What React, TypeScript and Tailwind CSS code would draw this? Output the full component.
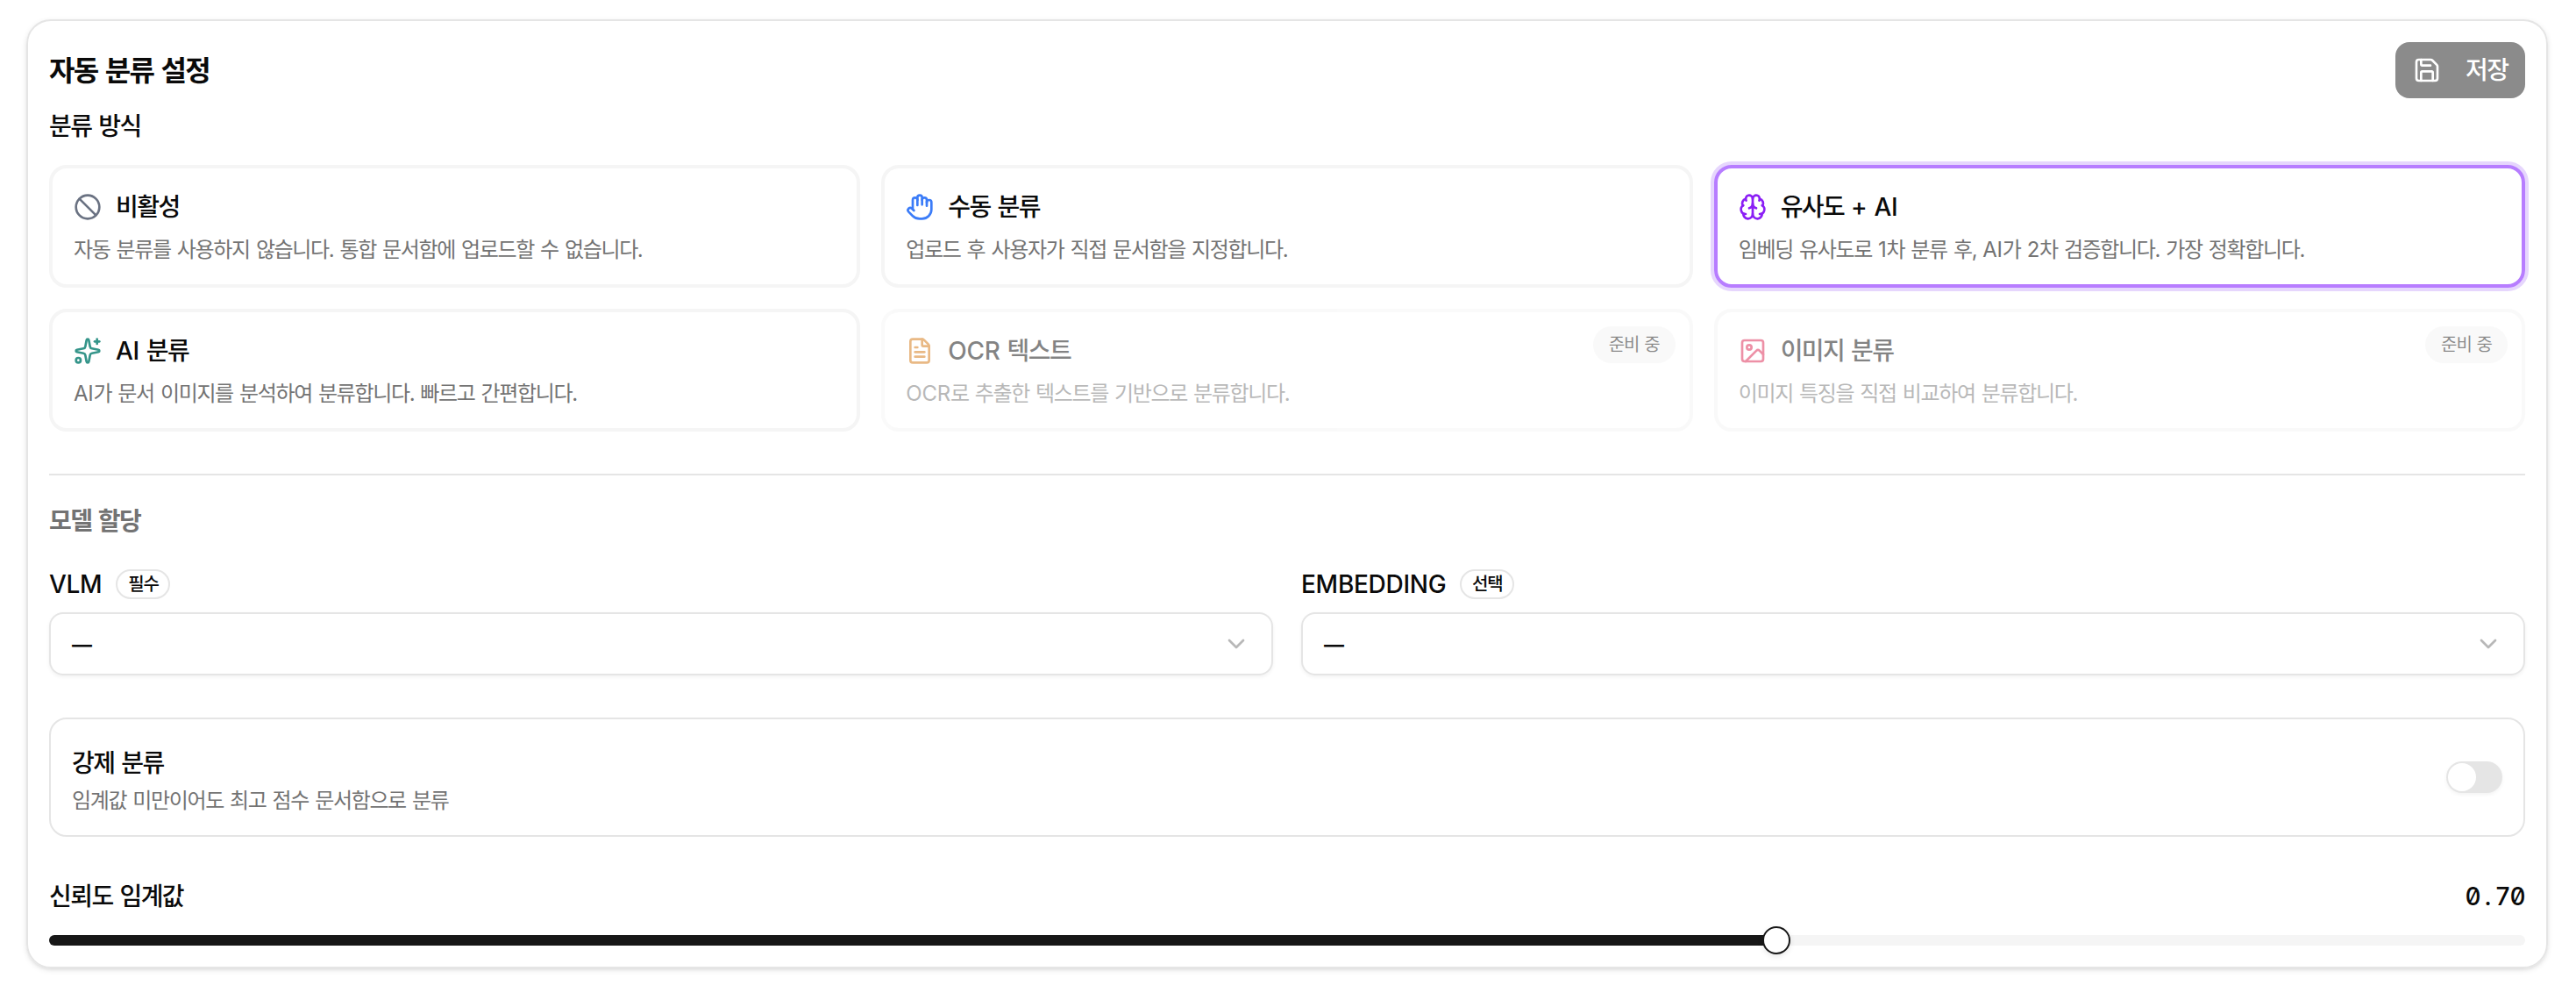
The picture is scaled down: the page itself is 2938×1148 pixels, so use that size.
import { useState } from 'react';
import {
  Ban,
  Brain,
  ChevronDown,
  FileText,
  Hand,
  Image as ImageIcon,
  Save,
  Sparkles,
  type LucideIcon,
} from 'lucide-react';
import clsx from 'clsx';

interface Method {
  id: string;
  icon: LucideIcon;
  iconClass: string;
  title: string;
  description: string;
  comingSoon?: boolean;
}

const METHODS: Method[] = [
  {
    id: 'disabled',
    icon: Ban,
    iconClass: 'text-gray-500',
    title: '비활성',
    description: '자동 분류를 사용하지 않습니다. 통합 문서함에 업로드할 수 없습니다.',
  },
  {
    id: 'manual',
    icon: Hand,
    iconClass: 'text-[#3b7cf8]',
    title: '수동 분류',
    description: '업로드 후 사용자가 직접 문서함을 지정합니다.',
  },
  {
    id: 'similarity',
    icon: Brain,
    iconClass: 'text-[#8b1ff5]',
    title: '유사도 + AI',
    description: '임베딩 유사도로 1차 분류 후, AI가 2차 검증합니다. 가장 정확합니다.',
  },
  {
    id: 'ai',
    icon: Sparkles,
    iconClass: 'text-[#35958a]',
    title: 'AI 분류',
    description: 'AI가 문서 이미지를 분석하여 분류합니다. 빠르고 간편합니다.',
  },
  {
    id: 'ocr',
    icon: FileText,
    iconClass: 'text-[#d5760e]',
    title: 'OCR 텍스트',
    description: 'OCR로 추출한 텍스트를 기반으로 분류합니다.',
    comingSoon: true,
  },
  {
    id: 'image',
    icon: ImageIcon,
    iconClass: 'text-[#dd2450]',
    title: '이미지 분류',
    description: '이미지 특징을 직접 비교하여 분류합니다.',
    comingSoon: true,
  },
];

// Hangul is set tighter than Latin, so the two scripts get their own tracking
function Label({ text }: { text: string }) {
  const parts = text.split(/([A-Za-z0-9+]+)/);
  return (
    <span className="tracking-[-0.056em] whitespace-nowrap [word-spacing:0.07em]">
      {parts.map((part, i) =>
        i % 2 ? (
          <span key={i} className="tracking-[-0.01em]">
            {part}
          </span>
        ) : (
          part
        )
      )}
    </span>
  );
}

function MethodCard({
  method,
  selected,
  onSelect,
}: {
  method: Method;
  selected: boolean;
  onSelect: () => void;
}) {
  const Icon = method.icon;
  return (
    <button
      type="button"
      disabled={method.comingSoon}
      onClick={onSelect}
      className={clsx(
        'relative flex h-[140px] flex-col gap-3 rounded-[20px] border-4 p-6 text-left',
        selected ? 'border-[#b77dff] ring-4 ring-[#e6d6fd]' : 'border-neutral-100',
        method.comingSoon && 'opacity-50'
      )}
    >
      {method.comingSoon && (
        <span className="absolute top-4 right-4 flex h-[42px] w-[94px] items-center justify-center rounded-full bg-neutral-100 text-[20px] text-neutral-900">
          <Label text="준비 중" />
        </span>
      )}
      <div className="flex h-10 items-center gap-4">
        <Icon className={clsx('size-8', method.iconClass)} />
        <span className="text-[28px] leading-10 font-medium">
          <Label text={method.title} />
        </span>
      </div>
      <p className="text-2xl leading-[34px] text-neutral-500">
        <Label text={method.description} />
      </p>
    </button>
  );
}

function ModelSelect({ name, badge }: { name: string; badge: string }) {
  return (
    <div className="flex flex-col">
      <div className="mb-[15px] flex h-[34px] items-center gap-4">
        <span className="text-[28px] font-medium">
          <Label text={name} />
        </span>
        <span className="flex h-[34px] w-[62px] items-center justify-center rounded-full border-2 border-neutral-200 text-[20px] leading-none font-medium">
          <Label text={badge} />
        </span>
      </div>
      <button
        type="button"
        className="flex h-[72px] items-center justify-between rounded-2xl border-2 border-neutral-200 px-6 shadow-[0_2px_4px_rgba(0,0,0,0.05)]"
      >
        <span className="pt-0.5 text-[23px] font-semibold">—</span>
        <ChevronDown className="size-8 text-neutral-500 opacity-50" />
      </button>
    </div>
  );
}

export default function App() {
  const [method, setMethod] = useState('similarity');
  const [forced, setForced] = useState(false);
  const threshold = 0.7;
  // the thumb is 32px wide and has to stay inside the track
  const thumbLeft = `calc((100% - 32px) * ${threshold})`;

  return (
    <div className="h-[1148px] bg-white pt-[22px] pr-8 pl-[30px] font-['Inter','Noto_Sans_CJK_KR',sans-serif] text-neutral-950">
      <div className="flex h-[1082px] flex-col rounded-[28px] border-2 border-neutral-200 p-6 shadow-[0_2px_6px_rgba(0,0,0,0.1),0_2px_4px_-2px_rgba(0,0,0,0.1)]">
        <div className="flex h-16 items-center justify-between">
          <h2 className="pt-0.5 text-[32px] font-semibold">
            <Label text="자동 분류 설정" />
          </h2>
          <button
            type="button"
            className="flex h-16 w-[148px] items-center gap-7 rounded-2xl bg-[#8b8b8b] px-5 text-[28px] font-medium text-white"
          >
            <Save className="size-8 shrink-0" />
            <Label text="저장" />
          </button>
        </div>

        <h3 className="mt-3 mb-6 text-[28px] leading-10 font-medium">
          <Label text="분류 방식" />
        </h3>

        <div className="grid grid-cols-3 gap-6">
          {METHODS.map((m) => (
            <MethodCard
              key={m.id}
              method={m}
              selected={m.id === method}
              onSelect={() => setMethod(m.id)}
            />
          ))}
        </div>

        <hr className="mt-12 border-t-2 border-neutral-200" />

        {/* Model assignment */}
        <h3 className="mt-8 text-[28px] leading-10 font-semibold text-neutral-500">
          <Label text="모델 할당" />
        </h3>
        <div className="mt-[35px] grid grid-cols-2 gap-8">
          <ModelSelect name="VLM" badge="필수" />
          <ModelSelect name="EMBEDDING" badge="선택" />
        </div>

        {/* Forced classification */}
        <div className="mt-12 flex h-[136px] items-center justify-between rounded-[20px] border-2 border-neutral-200 px-6">
          <div className="pt-0.5">
            <p className="text-[28px] leading-[52px] font-medium">
              <Label text="강제 분류" />
            </p>
            <p className="text-2xl leading-[34px] text-neutral-500">
              <Label text="임계값 미만이어도 최고 점수 문서함으로 분류" />
            </p>
          </div>
          <button
            type="button"
            role="switch"
            aria-checked={forced}
            onClick={() => setForced(!forced)}
            className={clsx(
              'flex h-9 w-16 items-center rounded-full p-0.5 shadow-[0_2px_4px_rgba(0,0,0,0.05)]',
              forced ? 'justify-end bg-neutral-900' : 'bg-neutral-200'
            )}
          >
            <span className="size-8 rounded-full bg-white" />
          </button>
        </div>

        {/* Confidence threshold */}
        <div className="mt-12 flex h-10 items-center justify-between text-[28px] font-medium">
          <Label text="신뢰도 임계값" />
          <span className="flex [font-feature-settings:'zero','tnum']">
            {threshold
              .toFixed(2)
              .split('')
              .map((c, i) => (
                <span key={i} className="flex w-[17px] justify-center">
                  {c}
                </span>
              ))}
          </span>
        </div>
        <div className="relative mt-6 h-3 rounded-full bg-neutral-100">
          <div
            className="h-full rounded-l-full bg-neutral-900"
            style={{ width: `${threshold * 100}%` }}
          />
          <span
            className="absolute -top-2.5 size-8 rounded-full border-2 border-neutral-900 bg-white shadow-[0_2px_6px_rgba(0,0,0,0.1)]"
            style={{ left: thumbLeft }}
          />
        </div>
      </div>
    </div>
  );
}
